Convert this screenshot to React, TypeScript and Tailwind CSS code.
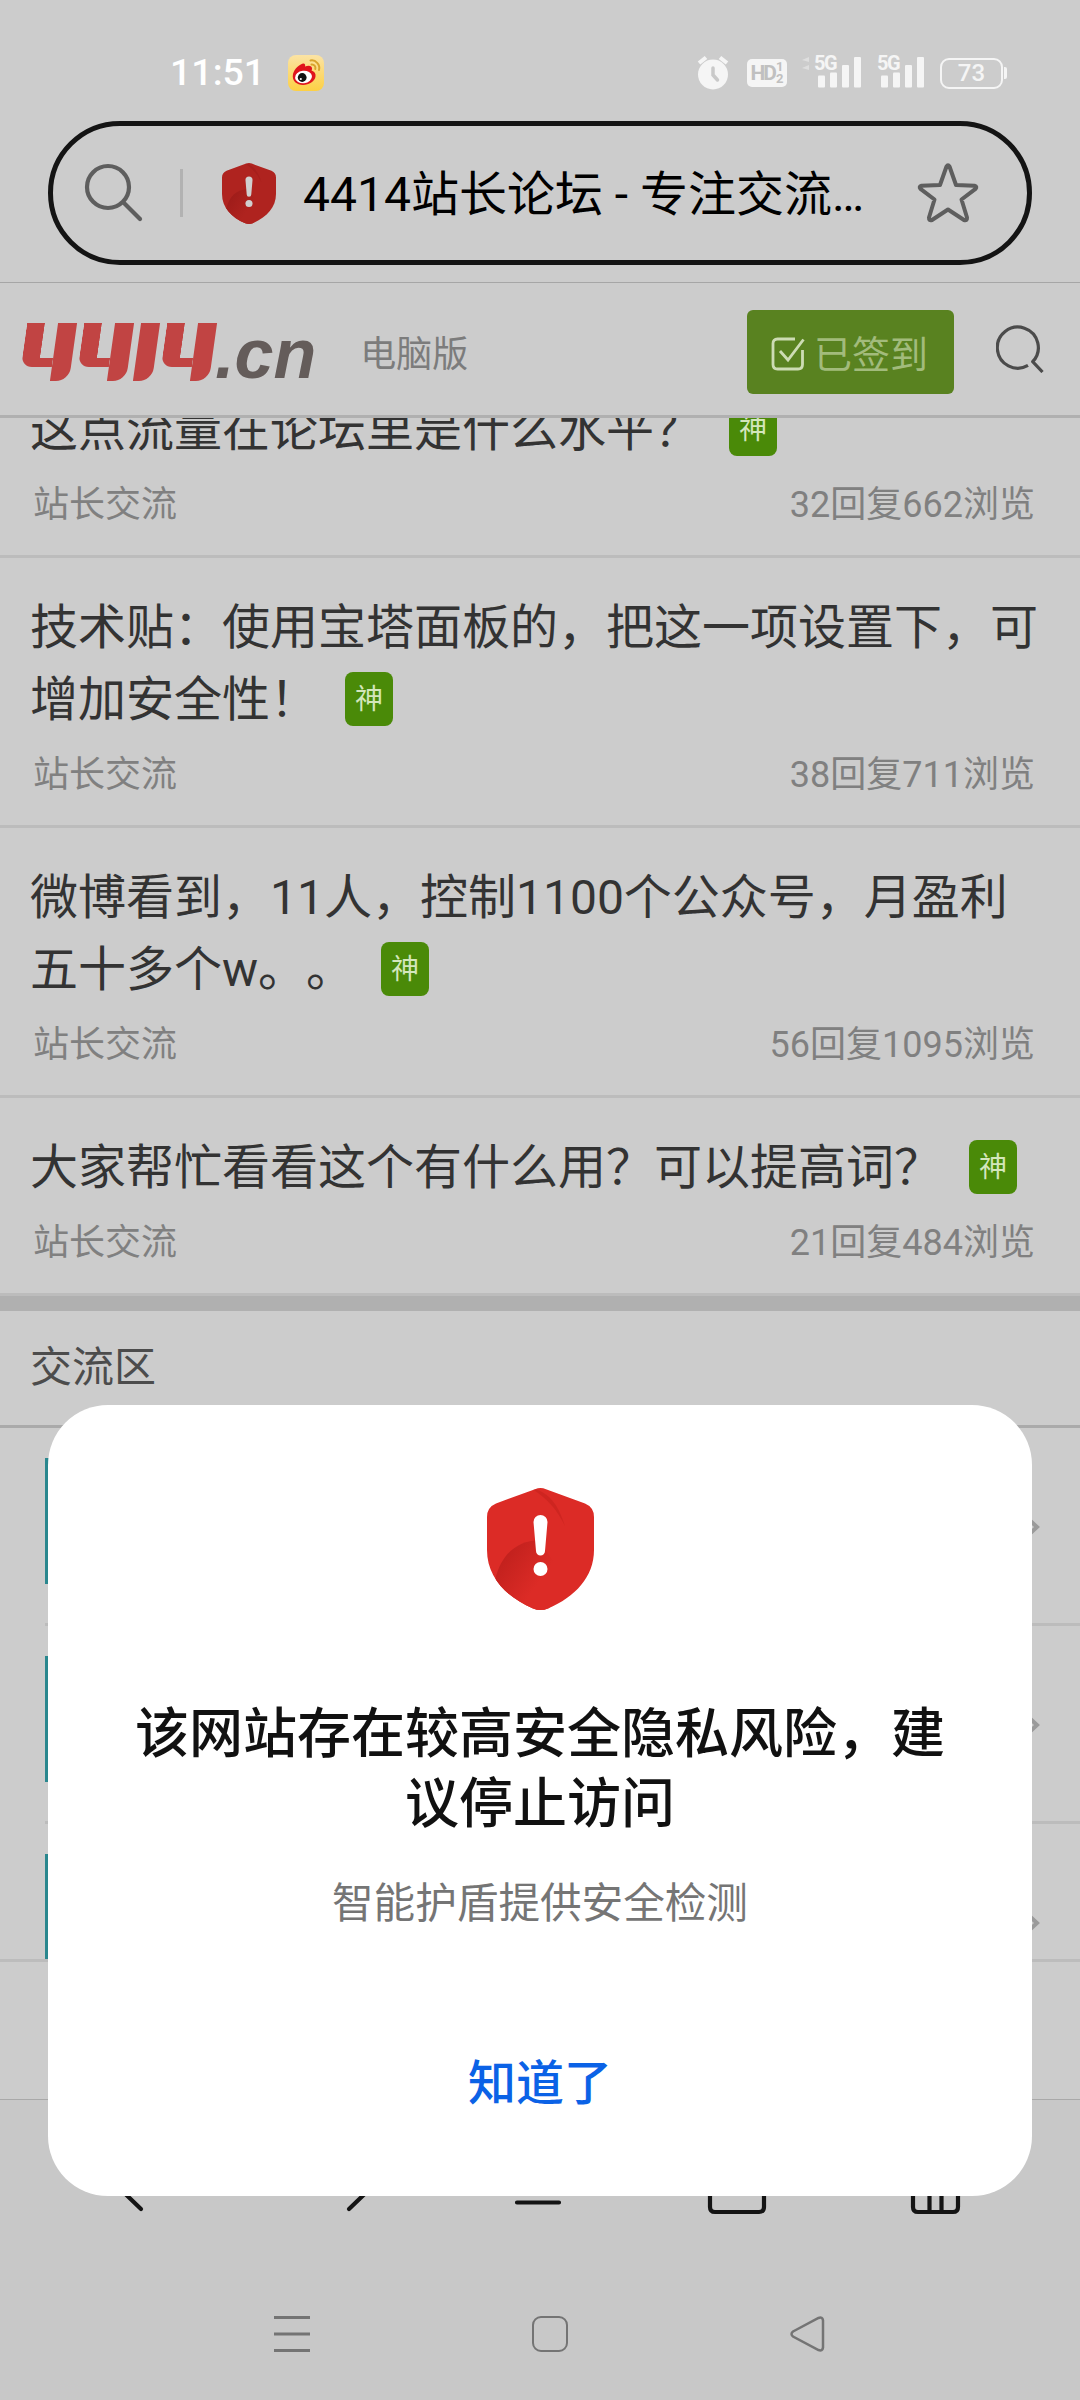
import { useId } from 'react';

interface Post {
  title: string;
  replies: number;
  views: number;
}

const posts: Post[] = [
  { title: '这点流量在论坛里是什么水平？', replies: 32, views: 662 },
  { title: '技术贴：使用宝塔面板的，把这一项设置下，可增加安全性！', replies: 38, views: 711 },
  { title: '微博看到，11人，控制1100个公众号，月盈利五十多个w。。', replies: 56, views: 1095 },
  { title: '大家帮忙看看这个有什么用？可以提高词？', replies: 21, views: 484 },
];

function ShieldIcon({ className, base, dark, mark }: { className: string; base: string; dark: string; mark: string }) {
  const id = useId();
  return (
    <svg className={className} viewBox="0 0 107 122" preserveAspectRatio="none">
      <defs>
        <linearGradient id={`${id}-a`} x1="0" y1="0" x2="0.9" y2="0.7">
          <stop offset="0" stopColor={dark} />
          <stop offset="0.8" stopColor={base} />
        </linearGradient>
        <clipPath id={`${id}-c`}>
          <path d="M48 1.2q5.500-2.200 11 0L98 15.500q9 3.800 9 13.500v33c0 27-19 47-46 58.500q-7.500 3-15 0C19 109 0 89 0 62V29q0-9.700 9-13.500z" />
        </clipPath>
      </defs>
      <g clipPath={`url(#${id}-c)`}>
        <rect width="107" height="122" fill={base} />
        <path d="M8 92C14 66 30 53 52 52l20 30-10 40H30z" fill={`url(#${id}-a)`} />
        <path d="M44 0c18 4 27 16 34 38C70 22 62 12 44 0z" fill={dark} opacity="0.4" />
      </g>
      <path d="M46.500 34a7 7 0 0 1 14 0l-2.500 29a4.500 4.500 0 0 1-9 0z" fill={mark} />
      <circle cx="53.500" cy="81" r="7" fill={mark} />
    </svg>
  );
}

function WeiboIcon() {
  return (
    <svg className="ml-[26px] h-9 w-9" viewBox="0 0 36 36">
      <defs>
        <linearGradient id="weibo-bg" x1="0" y1="0" x2="0" y2="1">
          <stop offset="0" stopColor="#fbe3a4" />
          <stop offset="1" stopColor="#fdd044" />
        </linearGradient>
      </defs>
      <rect width="36" height="36" rx="8" fill="url(#weibo-bg)" />
      <path d="M5 19c1-5 7-10 10-10.500 2-.3 2.500 1.500 2 3 3-1.300 7-1.500 7 2 0 1 0 1.300-.5 2 3 1 4.500 3 4 6C27 26 21 30 15 30S3.500 26 5 19z" fill="#e0141c" />
      <ellipse cx="15.500" cy="22" rx="8.500" ry="6.200" fill="#fff" transform="rotate(-6 15.500 22)" />
      <circle cx="14.200" cy="22.500" r="4.400" fill="#111" />
      <circle cx="12.800" cy="24" r="1.100" fill="#fff" />
      <path d="M22.500 5.500c5-1 10 4 8.500 9.500M23.500 9.500c2.500-.3 4.500 1.800 3.800 4.500" fill="none" stroke="#d8a32c" strokeWidth="2" strokeLinecap="round" />
    </svg>
  );
}

function Signal() {
  return (
    <div className="relative -mt-1 h-[33px] w-[47px] text-[#f5f5f5]">
      <svg className="h-full w-full" viewBox="0 0 47 33" fill="currentColor">
        <rect x="4" y="20.500" width="7" height="12" rx="1" />
        <rect x="16" y="17.500" width="7" height="15" rx="1" />
        <rect x="28" y="10" width="7" height="22.500" rx="1" />
        <rect x="40" y="2" width="7" height="30.500" rx="1" />
      </svg>
      <span className="absolute -top-1 left-0 text-[20px] leading-6 font-bold tracking-[-1.500px]">5G</span>
    </div>
  );
}

function StatusBar() {
  return (
    <div className="flex h-[121px] items-center pt-[25px] pr-[73px] pl-[170px]">
      <span className="w-[92px] text-[37.500px] leading-none font-medium whitespace-nowrap text-white">11:51</span>
      <WeiboIcon />
      <div className="ml-auto flex items-center">
        <svg className="h-9 w-8" viewBox="0 0 32 36">
          <path d="M2 8l7-5.500M30 8l-7-5.500" stroke="#f5f5f5" strokeWidth="4" />
          <circle cx="16" cy="19.500" r="15" fill="#f5f5f5" />
          <path d="M16 13v7l4.500 5" fill="none" stroke="#c9c9c9" strokeWidth="3.500" strokeLinecap="round" />
        </svg>
        <div className="ml-[18px] flex h-7 w-10 items-center justify-center gap-px rounded-[5px] bg-[#f5f5f5] text-[#c0c0c0]">
          <span className="text-[21px] leading-none font-bold tracking-[-2px]">HD</span>
          <span className="flex flex-col text-[13px] leading-[12px] font-bold">
            <span>1</span>
            <span>2</span>
          </span>
        </div>
        <svg className="-mt-2 ml-[15px] h-8 w-[8px]" viewBox="0 0 8 32" fill="#dedede">
          <path d="M0 7l7-3v5zM0 15l7-3v5z" />
        </svg>
        <div className="ml-1 flex gap-4">
          <Signal />
          <Signal />
        </div>
        <div className="ml-4 flex items-center">
          <span className="flex h-[31px] w-[63px] items-center justify-center rounded-[9px] border-[2.500px] border-[#f5f5f5] text-[24px] leading-none font-medium text-[#f5f5f5]">
            73
          </span>
          <span className="ml-px h-3 w-[3px] rounded-r-[2px] bg-[#f5f5f5]" />
        </div>
      </div>
    </div>
  );
}

function AddressBar() {
  return (
    <div className="mx-12 flex h-36 items-center rounded-full border-[5px] border-[#141414] pr-[48px] pl-[31px]">
      <svg className="h-[60px] w-[60px]" viewBox="0 0 60 60" fill="none" stroke="#5e5e5e" strokeWidth="4.200" strokeLinecap="round">
        <circle cx="24" cy="24" r="21" />
        <path d="M39.500 39.500L56 56" />
      </svg>
      <span className="ml-9 h-12 w-[3px] bg-[#b2b2b2]" />
      <ShieldIcon className="ml-[39px] h-[61px] w-[54px]" base="#af231f" dark="#991a18" mark="#d0d0d0" />
      <span className="mt-1 ml-[27px] flex-1 text-[48px] leading-[72px] whitespace-nowrap text-black">4414站长论坛 - 专注交流…</span>
      <svg className="h-[60px] w-[62px]" viewBox="0 0 62 60" fill="none" stroke="#5e5e5e" strokeWidth="4" strokeLinejoin="round">
        <path d="M29.500 3.500q1.500-2.500 3 0L39 22l18.500.8q3 .8 1 3L44.500 36.500 50 54.500q.2 3.500-3 2.500L31 46.500 15 57q-3.200 1-3-2.500L17.500 36.500 3.500 25.800q-2-2.200 1-3L23 22z" />
      </svg>
    </div>
  );
}

// one "4" of the wordmark: a hooked left arm joined to a full-height stem
function LogoFour() {
  return (
    <div className="flex h-[58px] w-[50px]">
      <div className="h-[44px] w-[31px] rounded-bl-[11px] border-b-[9px] border-l-[18px] border-[#c14443]" />
      <div className="h-full w-[19px] rounded-br-[13px] bg-[#c14443]" />
    </div>
  );
}

function SiteHeader() {
  return (
    <header className="relative z-10 mt-[17px] flex h-[136px] items-center border-t border-b-[3px] border-t-[#a6a6a6] border-b-[#b0b0b0] bg-[#cccccc] pt-[6px] pl-[23px]">
      <div className="flex items-end">
        <div className="flex -skew-x-[8deg] gap-[7px]">
          <LogoFour />
          <LogoFour />
          <div className="h-[58px] w-[19px] rounded-br-[13px] bg-[#c14443]" />
          <LogoFour />
        </div>
        <span className="ml-[2px] h-[58px] font-['Liberation_Sans',sans-serif] text-[70px] leading-[63px] font-bold text-[#645c5a] italic">.cn</span>
      </div>
      <span className="mt-[5px] ml-[44px] text-[36px] leading-none text-[#7c7c7c]">电脑版</span>
      <button className="mr-[42px] ml-auto flex h-[84px] w-[207px] items-center rounded-md bg-[#598220] pt-1 pl-6 text-[#a2bb7c]">
        <svg className="h-[34px] w-[34px]" viewBox="0 0 34 34" fill="none" stroke="#cddcb4" strokeWidth="2.800">
          <path d="M24 2H6.500Q2 2 2 6.500v21Q2 32 6.500 32h20.500q4.500 0 4.500-4.500V13" />
          <path d="M9 14l8 9L32.500 2.500" />
        </svg>
        <span className="mt-[2px] ml-[9px] text-[38px] leading-none whitespace-nowrap">已签到</span>
      </button>
      <svg className="mr-[36px] mb-[6px] h-[48px] w-[48px]" viewBox="0 0 48 48" fill="none" stroke="#4b4b4b" strokeWidth="3.200">
        <path d="M32 40.400A20.500 20.500 0 1 1 36.700 36.700L46.500 47" strokeLinejoin="round" />
      </svg>
    </header>
  );
}

function PostItem({ post }: { post: Post }) {
  return (
    <li className="border-b-[3px] border-[#bcbcbc] pt-[34px] pb-[23px]">
      <h3 className="ml-[30px] w-[1018px] text-[48px] leading-[72px] break-all text-[#333333]">
        {post.title}
        <span className="ml-[27px] inline-flex h-[54px] w-12 items-center justify-center rounded-lg bg-[#4a8a08] pt-[3px] align-[7px] text-[28px] leading-none text-[#d3e6bb]">
          神
        </span>
      </h3>
      <div className="mt-3 flex justify-between pr-[45px] pl-[33px] text-[36px] leading-[54px] text-[#808080]">
        <span>站长交流</span>
        <span>
          {post.replies}回复{post.views}浏览
        </span>
      </div>
    </li>
  );
}

function ForumRow() {
  return (
    <div className="ml-[45px] flex h-[198px] shrink-0 items-center justify-between border-b-[3px] border-[#bcbcbc] pr-[40px]">
      <span className="mb-[9px] h-[126px] w-[120px] bg-[#2a878e]" />
      <svg className="mt-[3px] h-7 w-5" viewBox="0 0 20 28" fill="none" stroke="#9a9a9a" strokeWidth="4">
        <path d="M4 2l13 12L4 26" />
      </svg>
    </div>
  );
}

function RiskDialog() {
  return (
    <div className="absolute top-[1405px] left-12 z-20 flex h-[791px] w-[984px] flex-col items-center rounded-[60px] bg-white pt-[83px]">
      <ShieldIcon className="h-[122px] w-[107px]" base="#dc2b26" dark="#b81d1a" mark="#ffffff" />
      <h2 className="mt-[90px] w-[812px] text-center text-[54px] leading-[70px] font-medium text-[#111111]">
        该网站存在较高安全隐私风险，建议停止访问
      </h2>
      <p className="mt-[31px] text-[41.600px] leading-[66px] text-[#757575]">智能护盾提供安全检测</p>
      <button className="mt-[111px] text-[48px] leading-[72px] font-medium text-[#0b62e6]">知道了</button>
    </div>
  );
}

function BrowserToolbar() {
  return (
    <div className="flex h-[164px] items-center border-t border-[#a9a9a9] pl-[101px]">
      <svg className="h-[66px] w-[860px]" viewBox="101 2148 860 66" fill="none" stroke="#141414" strokeWidth="4.200" strokeLinecap="round" strokeLinejoin="round">
        <path d="M141 2208l-26-25 26-25" />
        <path d="M349 2208l26-25-26-25" />
        <path d="M517 2165h42M517 2183h42M517 2201.500h42" />
        <path d="M710 2181v25q0 5 5 5h44q5 0 5-5v-25l-27-24z" />
        <path d="M913 2160v46q0 5 5 5h35q5 0 5-5v-46zM929.500 2160v51M941.500 2160v51" />
      </svg>
    </div>
  );
}

function SystemNav() {
  return (
    <nav className="flex h-[136px] items-center pt-[5px] pl-[274px]">
      <svg className="h-9 w-9" viewBox="0 0 36 36" stroke="#747474" strokeWidth="3">
        <path d="M0 1.500h36M0 18h36M0 34.500h36" />
      </svg>
      <span className="ml-[222px] h-9 w-9 rounded-[9px] border-[2.500px] border-[#747474]" />
      <svg className="ml-[222px] h-9 w-9" viewBox="0 0 36 36" fill="none" stroke="#747474" strokeWidth="2.500">
        <path d="M3 15.500L28.500 2q4-1.500 4.500 2.500v27q-.5 4-4.500 2.500L3 20.500q-3-2.500 0-5z" />
      </svg>
    </nav>
  );
}

export default function App() {
  return (
    <div
      lang="zh-CN"
      className="relative flex h-[2400px] w-[1080px] flex-col overflow-hidden bg-[#cccccc] font-[Roboto,'Noto_Sans_CJK_SC',sans-serif] [text-spacing-trim:space-all]"
    >
      <StatusBar />
      <AddressBar />
      <SiteHeader />

      {/* page content, scrolled partly under the header */}
      <main className="flex h-[1544px] shrink-0 flex-col overflow-hidden border-b-[3px] border-[#bcbcbc]">
        <ul className="-mt-[58px]">
          {posts.map((post) => (
            <PostItem key={post.views} post={post} />
          ))}
        </ul>
        <div className="h-[15px] shrink-0 bg-[#b0b0b0]" />
        <h2 className="h-[117px] shrink-0 border-b-[3px] border-[#aaaaaa] pl-[30px] text-[42px] leading-[114px] text-[#4c4c4c]">交流区</h2>
        <ForumRow />
        <ForumRow />
        <ForumRow />
      </main>
      <div className="h-[137px] shrink-0" />

      <footer className="flex-1 bg-[#c8c8c8]">
        <BrowserToolbar />
        <SystemNav />
      </footer>

      <RiskDialog />
    </div>
  );
}
